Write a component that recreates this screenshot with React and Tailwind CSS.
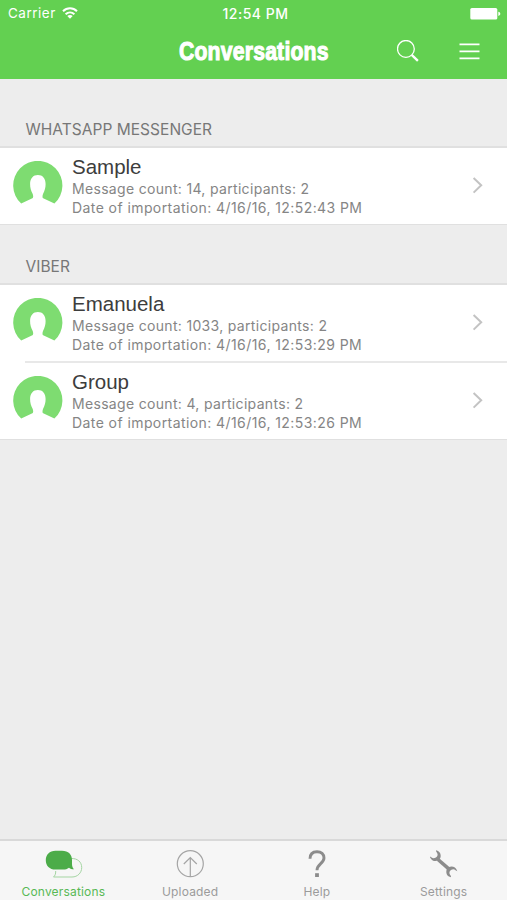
const sections = [
  { title: 'WHATSAPP MESSENGER', rows: [{ name: 'Sample', count: 14, date: '4/16/16, 12:52:43 PM' }] },
  {
    title: 'VIBER',
    rows: [
      { name: 'Emanuela', count: 1033, date: '4/16/16, 12:53:29 PM' },
      { name: 'Group', count: 4, date: '4/16/16, 12:53:26 PM' },
    ],
  },
];

function StatusBar() {
  return (
    <div className="grid h-[27px] grid-cols-3 items-center text-[13.5px] leading-none">
      <div className="flex items-center gap-[6px] pt-px pl-[8px]">
        <span className="tracking-[0.5px]">Carrier</span>
        <svg className="mb-[2px]" width="16" height="12" viewBox="0 0 16 12" fill="none" stroke="white" strokeWidth="2">
          <path d="M1 4.2C5 .3 11 .3 15 4.2" />
          <path d="M3.6 7.300C6.200 4.900 9.800 4.900 12.400 7.300" />
          <path d="M8 11.700 5.300 9C6.800 7.500 9.200 7.500 10.700 9Z" fill="white" stroke="none" />
        </svg>
      </div>
      <span className="pt-px pl-[4px] text-center text-[14px] font-medium tracking-[0.5px] whitespace-nowrap">12:54 PM</span>
      <svg className="mr-[6px] ml-auto" width="31" height="12" viewBox="0 0 31 12" fill="white">
        <rect x="0.3" y="0" width="27" height="11.6" rx="1.6" />
        <path d="M28.300 3.700c1.400.3 2 1.100 2 2.100s-.6 1.800-2 2.100z" />
      </svg>
    </div>
  );
}

function Header() {
  return (
    <header className="h-[79px] shrink-0 bg-[#63d051] text-white">
      <StatusBar />
      <div className="grid h-[48px] grid-cols-[1fr_152px_1fr] items-center">
        <span />
        <h1 className="flex justify-center font-['Liberation_Sans',Arial,sans-serif] text-[26px] leading-none font-bold [-webkit-text-stroke:1.1px_white]">
          <span className="origin-center scale-x-[0.815] pl-px tracking-[0.25px]">Conversations</span>
        </h1>
        <div className="flex items-center justify-end gap-[39px] pr-[27px]">
          <svg width="23" height="23" viewBox="0.5 0.500 23 23" fill="none" stroke="white">
            <circle cx="9.4" cy="9.4" r="8.4" strokeWidth="1.3" />
            <path d="m15.200 15.400 6.200 6" strokeWidth="2.3" />
          </svg>
          <svg width="21" height="17" viewBox="0 0 21 17" stroke="white" strokeWidth="1.8">
            <path d="M.5 1.300h20M.5 8.300h20M.5 15.300h20" />
          </svg>
        </div>
      </div>
    </header>
  );
}

function Avatar() {
  return (
    <svg className="-mt-[7px] shrink-0" width="50" height="43" viewBox="0.4 0 50 43">
      <path
        fill="#7edc71"
        d="M8.600 42.600A24.600 24.600 0 1 1 41.800 42.600L30.600 37.300c-1-.6-.8-3.200-.1-4.600 1.600-3 2.500-6 2.500-9.700 0-5.600-3-9-7.700-9s-7.800 3.400-7.800 9c0 4.200.9 6.700 2.500 9.700.7 1.400.9 4-.2 4.600Z"
      />
    </svg>
  );
}

function Row({ row, divided }) {
  return (
    <li className="bg-white">
      {divided && <div className="ml-[25px] h-[2px] bg-[#e8e8e8]" />}
      <div className="flex h-[76px] items-center pr-[23px] pl-[13px]">
        <Avatar />
        <div className="ml-[9px] flex-1 whitespace-nowrap">
          <div className="font-['Liberation_Sans',Arial,sans-serif] text-[20.5px] leading-[24px] text-[#3d3d3d]">{row.name}</div>
          <div className="text-[14px] leading-[19.5px] tracking-[0.32px] text-[#858585]">
            Message count: {row.count}, participants: 2
          </div>
          <div className="text-[14px] leading-[19.5px] tracking-[0.42px] text-[#858585]">Date of importation: {row.date}</div>
        </div>
        <svg width="12" height="18" viewBox="0 0.500 12 18" fill="none" stroke="#c3c3c3" strokeWidth="2">
          <path d="m1.600 1.500 7.600 7.300-7.600 7.300" />
        </svg>
      </div>
    </li>
  );
}

const tabs = [
  {
    label: 'Conversations',
    active: true,
    icon: (
      <svg className="ml-[2px]" width="38" height="30" viewBox="0 0 38 30">
        <path d="M26 8.500c6.500-.3 10.700 3.400 10.700 9 0 5.300-4 9.500-9.700 9.500H8.500c1.500-1.200 2.300-3 2.200-6" fill="none" stroke="#a4d5a2" />
        <path d="M10.500.7H17c6.500 0 10 3.800 10 9.200v4c0 2.300.7 4 2 5.400-2.200 0-3.700-.5-5-1.500-1.700 1.300-3.600 1.800-6 1.800h-7.500C4.500 19.600.8 15.700.8 10.200S4.500.7 10.500.7Z" fill="#4cac49" />
      </svg>
    ),
  },
  {
    label: 'Uploaded',
    icon: (
      <svg width="28" height="30" viewBox="-0.300 0 28 30" fill="none" stroke="#a5a5a5" strokeWidth="1.200">
        <circle cx="14" cy="13.700" r="13" />
        <path d="M14 26V7.500M7.500 14 14 7.500l6.500 6.500" />
      </svg>
    ),
  },
  {
    label: 'Help',
    icon: (
      <svg className="ml-px" width="20" height="30" viewBox="0 0 20 30">
        <path d="M3 8.800C3 4.200 5.700 1.700 10 1.700c4.300 0 7 2.500 7 6.300 0 5.400-7 5.900-7 12.200" fill="none" stroke="#8c8c8c" strokeWidth="2.900" />
        <path d="M8.100 23.200h3.800v3.800H8.100z" fill="#8c8c8c" />
      </svg>
    ),
  },
  {
    label: 'Settings',
    icon: (
      <svg width="28" height="30" viewBox="0.500 0 28 30" fill="#8c8c8c">
        <path d="m8.500 9.500 10.800 9.300" stroke="#8c8c8c" strokeWidth="3.600" />
        <path d="M6.500.3C10.500 1 12 4.500 10.800 8c-1.600 4-8.600 4.700-10.600-1.600C1.500 6.500 2.300 8.300 4.300 8.300 7 8 8.500 6 8 4 7.700 2.700 6.300 2 6.500.3Z" />
        <path d="M21.500 27.300c-4-.7-5.500-4.200-4.300-7.700 1.600-4 8.600-4.700 10.600 1.600-1.300-.1-2.100-1.900-4.100-1.900-2.700.3-4.200 2.300-3.700 4.300.3 1.300 1.700 2 1.500 3.700Z" />
      </svg>
    ),
  },
];

export default function App() {
  return (
    <div className="flex h-[900px] w-[507px] flex-col overflow-hidden bg-[#ededed] font-['Inter',sans-serif]">
      <Header />
      <main className="flex-1">
        {sections.map((section, i) => (
          <section key={section.title}>
            <h2 className={`flex items-end pb-[7px] pl-[25.500px] text-[15.5px] leading-[18px] text-[#777] ${i === 0 ? 'h-[67px]' : 'h-[58px]'}`}>
              <span className="tracking-[0.03px]">{section.title}</span>
            </h2>
            <ul className="border-t-2 border-b border-[#e0e0e0]">
              {section.rows.map((row, n) => (
                <Row key={row.name} row={row} divided={n > 0} />
              ))}
            </ul>
          </section>
        ))}
      </main>
      <nav className="grid h-[61px] shrink-0 grid-cols-4 border-t-2 border-[#d9d9d9] bg-[#f6f6f6] pt-[9px]">
        {tabs.map((tab) => (
          <div key={tab.label} className={`flex flex-col items-center ${tab.active ? 'text-[#58b955]' : 'text-[#9b9b9b]'}`}>
            {tab.icon}
            <span className="mt-[4px] text-[12px] leading-[16px] tracking-[0.18px]">{tab.label}</span>
          </div>
        ))}
      </nav>
    </div>
  );
}
